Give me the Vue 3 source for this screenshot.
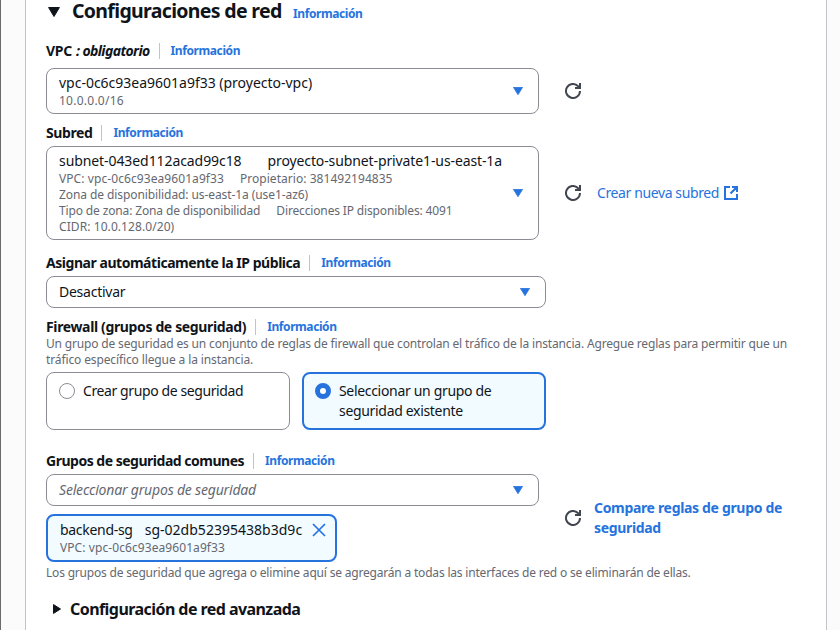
<script setup>
import { h } from 'vue'

const Caret = () =>
  h('svg', { class: 'caret', viewBox: '0 0 10 8', width: 10, height: 8 }, [
    h('path', { d: 'M.4.3h9.2L5 7.7z', fill: '#2673dd', stroke: '#2673dd', 'stroke-width': 0.8, 'stroke-linejoin': 'round' })
  ])

const Refresh = () =>
  h('svg', { viewBox: '0 0 16 16', width: 16, height: 16, fill: 'none', stroke: '#424650', 'stroke-width': 2 }, [
    h('path', { d: 'M15 8a7 7 0 1 1-2.1-5L15 4.9' }),
    h('path', { d: 'M15 0v5h-5' })
  ])
</script>

<template>
  <div class="page">
    <main class="panel">
      <header class="heading">
        <svg class="toggle" viewBox="0 0 12 10" width="12" height="10"><path d="M.6.5h10.8L6 9.5z" fill="#0f141a" stroke="#0f141a" stroke-linejoin="round" /></svg>
        <h2>Configuraciones de red</h2>
        <a class="info">Información</a>
      </header>

      <section class="vpc">
        <div class="label">
          <b class="l-vpc">VPC</b><i class="l-req">: obligatorio</i><a class="info sep">Información</a>
        </div>
        <div class="row">
          <div class="select">
            <div class="lines">
              <p class="v-vpc">vpc-0c6c93ea9601a9f33 (proyecto-vpc)</p>
              <small class="v-cidr">10.0.0.0/16</small>
            </div>
            <Caret />
          </div>
          <Refresh />
        </div>
      </section>

      <section class="subnet">
        <div class="label"><b class="l-subnet">Subred</b><a class="info sep">Información</a></div>
        <div class="row">
          <div class="select">
            <div class="lines">
              <p class="pair"><span class="v-subid">subnet-043ed112acad99c18</span><span class="v-subname">proyecto-subnet-private1-us-east-1a</span></p>
              <small class="pair"><span class="v-id">VPC: vpc-0c6c93ea9601a9f33</span><span class="v-owner">Propietario: 381492194835</span></small>
              <small class="v-zone">Zona de disponibilidad: us-east-1a (use1-az6)</small>
              <small class="pair"><span class="v-type">Tipo de zona: Zona de disponibilidad</span><span class="v-ips">Direcciones IP disponibles: 4091</span></small>
              <small class="v-range">CIDR: 10.0.128.0/20)</small>
            </div>
            <Caret />
          </div>
          <Refresh />
          <a class="link create">
            <span>Crear nueva subred</span>
            <svg viewBox="0 0 16 16" width="16" height="16" fill="none" stroke="#2673dd" stroke-width="2"><path d="M7 2H2v12h12V9M9 2h5v5M14 2 7.5 8.5" /></svg>
          </a>
        </div>
      </section>

      <section class="ip">
        <div class="label"><b class="l-ip">Asignar automáticamente la IP pública</b><a class="info sep">Información</a></div>
        <div class="select wide"><p class="v-off">Desactivar</p><Caret /></div>
      </section>

      <section class="firewall">
        <div class="label"><b class="l-fw">Firewall (grupos de seguridad)</b><a class="info sep">Información</a></div>
        <p class="desc">
          <span class="d-1">Un grupo de seguridad es un conjunto de reglas de firewall que controlan el tráfico de la instancia. Agregue reglas para permitir que un</span><br />
          <span class="d-2">tráfico específico llegue a la instancia.</span>
        </p>
        <div class="tiles">
          <div class="tile"><span class="radio"></span><p class="t-new">Crear grupo de seguridad</p></div>
          <div class="tile selected"><span class="radio"></span><p class="t-old">Seleccionar un grupo de<br />seguridad existente</p></div>
        </div>
      </section>

      <section class="groups">
        <div class="label"><b class="l-groups">Grupos de seguridad comunes</b><a class="info sep">Información</a></div>
        <div class="row">
          <div class="stack">
            <div class="select"><p class="placeholder">Seleccionar grupos de seguridad</p><Caret /></div>
            <div class="token">
              <div class="lines">
                <p class="pair"><span class="k-name">backend-sg</span><span class="k-id">sg-02db52395438b3d9c</span></p>
                <small class="v-id">VPC: vpc-0c6c93ea9601a9f33</small>
              </div>
              <svg viewBox="0 0 14 14" width="14" height="14" fill="none" stroke="#2673dd" stroke-width="1.7"><path d="M1 1l12 12M13 1 1 13" /></svg>
            </div>
          </div>
          <Refresh />
          <a class="link compare">Compare reglas de grupo de<br />seguridad</a>
        </div>
        <p class="desc d-3">Los grupos de seguridad que agrega o elimine aquí se agregarán a todas las interfaces de red o se eliminarán de ellas.</p>
      </section>

      <footer class="advanced">
        <svg viewBox="0 0 8 10" width="8" height="10"><path d="M.5.6v8.8L7.5 5z" fill="#0f141a" stroke="#0f141a" stroke-linejoin="round" /></svg>
        <h3>Configuración de red avanzada</h3>
      </footer>
    </main>
  </div>
</template>

<style>
body { margin: 0; overflow: hidden; }
</style>

<style scoped>
.page {
  box-sizing: border-box;
  display: flex;
  width: 840px;
  height: 630px;
  padding: 0 13px 0 24px;
  border-left: 1px solid #6b6b6b;
  background: #fbfbfb;
  color: #0f141a;
  font: 14px/20px "Noto Sans", "Open Sans", sans-serif;
}
.panel {
  box-sizing: border-box;
  flex: 1;
  padding-left: 20px;
  border: solid #c1c3c9;
  border-width: 0 1px;
  background: #fff;
  white-space: nowrap;
}
p, h2, h3 { margin: 0; }
svg { flex: none; }
.heading { display: flex; align-items: center; height: 24px; padding-left: 2px; }
.toggle { margin-right: 12px; }
h2 { width: 221px; font-size: 19.5px; font-weight: 700; line-height: 22px; padding-bottom: 2px; letter-spacing: -0.67px; }
.info { color: #2673dd; font-size: 12px; font-weight: 700; line-height: 16px; letter-spacing: -0.41px; }
.heading .info { padding-top: 4px; }
.label { display: flex; align-items: center; height: 16px; line-height: 16px; }
b, i { font-weight: 700; }
.sep { margin-left: 9px; padding-left: 11px; border-left: 1px solid #c1c3c9; }
.vpc { padding-top: 19px; }
.vpc .row { margin-top: 9px; }
.subnet { padding-top: 11px; }
.subnet .row { margin-top: 5px; }
.ip { padding-top: 15px; }
.ip .select { margin-top: 5px; }
.firewall { padding-top: 11px; }
.groups { padding-top: 23px; }
.groups .row { margin-top: 5px; }
.row { display: flex; align-items: center; }
.row > svg { margin-left: 26px; }
.select {
  box-sizing: border-box;
  display: flex;
  align-items: center;
  justify-content: space-between;
  width: 493px;
  min-height: 32px;
  padding: 4px 15px 4px 12px;
  border: 1px solid #8c8c94;
  border-radius: 8px;
}
.wide { width: 500px; }
.lines { display: flex; flex-direction: column; }
small { color: #656871; font-size: 12px; line-height: 16px; }
.pair { display: flex; gap: 16px; }
p.pair { gap: 26px; }
.link { color: #2673dd; }
.create { display: flex; align-items: center; gap: 4px; margin-left: 16px; letter-spacing: -0.39px; }
.compare { margin-left: 13px; font-weight: 700; letter-spacing: -0.33px; }
.desc { color: #656871; font-size: 12px; line-height: 16px; }
.firewall .desc { margin-top: 1px; }
.tiles { display: flex; gap: 12px; margin-top: 4px; }
.tile {
  box-sizing: border-box;
  display: flex;
  gap: 8px;
  width: 244px;
  height: 58px;
  padding: 8px 12px;
  border: 1px solid #8c8c94;
  border-radius: 8px;
}
.selected { padding: 7px 11px; border: 2px solid #2673dd; background: #f2fbff; }
.radio { box-sizing: border-box; flex: none; width: 16px; height: 16px; margin-top: 2px; border: 1px solid #8c8c94; border-radius: 50%; }
.selected .radio { border: 5px solid #2673dd; background: #fff; }
.placeholder { color: #656871; font-style: italic; letter-spacing: -0.19px; }
.token {
  box-sizing: border-box;
  display: flex;
  width: 291px;
  height: 48px;
  margin-top: 8px;
  padding: 4px 9px 4px 12px;
  justify-content: space-between;
  border: 2px solid #2673dd;
  border-radius: 8px;
  background: #f2fbff;
}
.token svg { margin-top: 3px; }
.token p.pair { gap: 12px; }
.d-3 { margin-top: 3px; letter-spacing: -0.19px; }
.advanced { display: flex; align-items: center; margin-top: 16px; padding-left: 7px; gap: 9px; }
h3 { font-size: 16px; font-weight: 700; line-height: 24px; letter-spacing: -0.56px; }
.l-vpc { width: 30px; letter-spacing: -0.26px; }
.l-req { letter-spacing: -0.6px; }
.l-subnet { letter-spacing: -0.4px; }
.l-ip { letter-spacing: -0.46px; }
.l-fw { letter-spacing: -0.36px; }
.l-groups { letter-spacing: -0.49px; }
.v-vpc { letter-spacing: -0.01px; }
.v-cidr { letter-spacing: 0.25px; }
.v-subid { letter-spacing: -0.08px; }
.v-subname { letter-spacing: -0.11px; }
.v-id { letter-spacing: 0.08px; }
.v-owner { letter-spacing: 0.04px; }
.v-zone { letter-spacing: -0.085px; }
.v-type { letter-spacing: -0.14px; }
.v-ips { letter-spacing: -0.15px; }
.v-range { letter-spacing: 0.08px; }
.v-off { letter-spacing: -0.25px; }
.d-1 { letter-spacing: -0.165px; }
.d-2 { letter-spacing: -0.12px; }
.t-new { letter-spacing: -0.4px; }
.t-old { letter-spacing: -0.32px; }
.k-name { letter-spacing: -0.3px; }
.k-id { letter-spacing: 0.02px; }
</style>
